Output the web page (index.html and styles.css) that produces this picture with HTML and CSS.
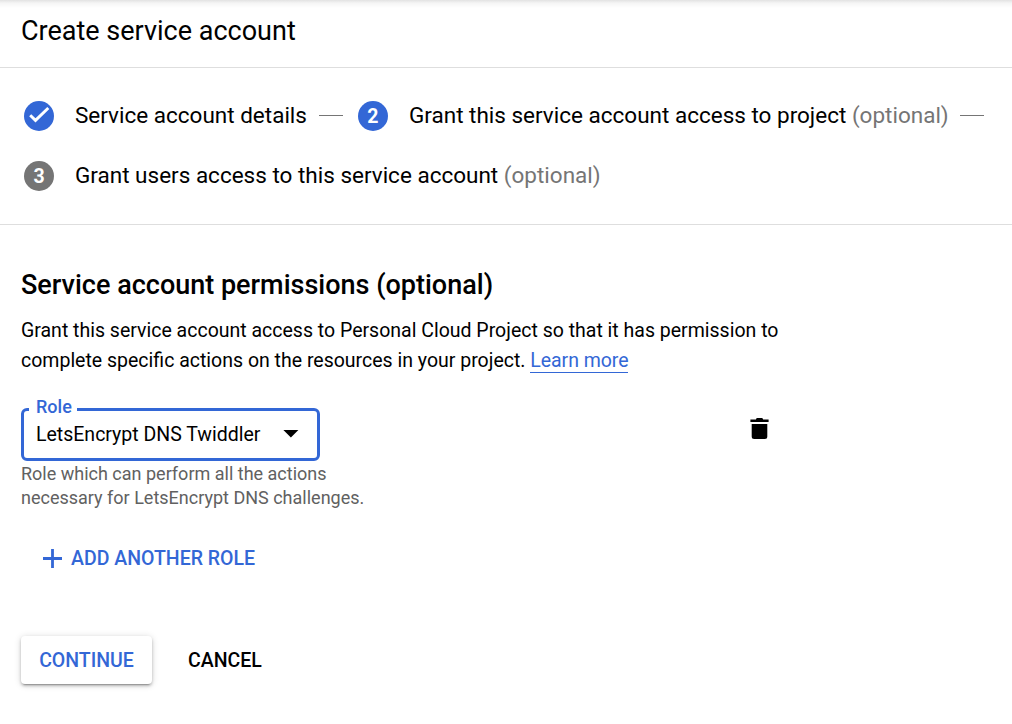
FILE: index.html
```html
<!DOCTYPE html>
<html lang="en">
<head>
<meta charset="utf-8">
<title>Create service account</title>
<link rel="stylesheet" href="styles.css">
</head>
<body>
<header class="header"><h1 class="title">Create service account</h1></header>
<ol class="stepper">
  <li class="step">
    <span class="badge badge-done"><svg width="22" height="22" viewBox="0 0 22 22"><path d="M2.2 10.2l5.3 5.2L20.3 3" fill="none" stroke="#fff" stroke-width="2.9"/></svg></span>
    <span class="label">Service account details</span><span class="connector"></span>
  </li>
  <li class="step">
    <span class="badge">2</span>
    <span class="label label-project">Grant this service account access to project <span class="optional">(optional)</span></span><span class="connector"></span>
  </li>
  <li class="step">
    <span class="badge badge-pending">3</span>
    <span class="label">Grant users access to this service account <span class="optional">(optional)</span></span>
  </li>
</ol>
<main class="content">
  <h2 class="heading">Service account permissions (optional)</h2>
  <p class="description">Grant this service account access to Personal Cloud Project so that it has permission to<br>complete specific actions on the resources in your project. <a class="link" href="#">Learn more</a></p>
  <div class="role-row">
    <div class="field">
      <div class="select"><span class="select-label">Role</span><span class="select-value">LetsEncrypt DNS Twiddler</span><svg class="caret" width="16" height="8" viewBox="0 0 16 8"><path d="M.4 0h15L7.9 7.5z"/></svg></div>
      <p class="hint">Role which can perform all the actions<br>necessary for LetsEncrypt DNS challenges.</p>
    </div>
    <button class="delete" aria-label="Delete role"><svg width="19" height="22" viewBox="0 0 19 22"><path d="M.4 1.4h5.5L6.7 0h5.6l.9 1.4h5.4v2.7H.4zM1.7 6h15.6v12.5q0 2.5-2.5 2.5H4.2q-2.5 0-2.5-2.5z"/></svg></button>
  </div>
  <button class="add"><svg width="19" height="19" viewBox="0 0 19 19"><path d="M9.5 0v19M0 9.5h19" stroke="currentColor" stroke-width="2.8"/></svg><span class="add-text">ADD ANOTHER ROLE</span></button>
  <div class="actions"><button class="continue">CONTINUE</button><button class="cancel">CANCEL</button></div>
</main>
</body>
</html>
```
FILE: styles.css
```css
* { box-sizing: border-box; }
body { margin: 0; height: 724px; overflow: hidden; background: #fff; color: #000; font-family: Roboto, sans-serif; font-size: 19.5px; }
h1, h2, p, ol { margin: 0; padding: 0; }
button { border: 0; background: none; padding: 0; font: 500 19.5px/24px Roboto, sans-serif; color: #000; }
svg { display: block; flex: none; }
.header { height: 68px; padding: 13px 21px 0; border-bottom: 1px solid #dedede; background: linear-gradient(#e2e2e2, #f5f5f5 3px, #fff 8px); }
.title { font-size: 27px; font-weight: 400; line-height: 36px; white-space: nowrap; }
.stepper { height: 157px; padding: 18px 24px 0; border-bottom: 1px solid #dedede; display: flex; flex-wrap: wrap; align-content: flex-start; list-style: none; column-gap: 15px; }
.step { height: 60px; display: flex; align-items: center; white-space: nowrap; }
.badge { width: 30px; height: 30px; padding-top: 2px; border-radius: 50%; background: #3367d6; color: #fff; display: flex; align-items: center; justify-content: center; font-size: 19.5px; font-weight: 700; line-height: 28px; }
.badge-done { padding-top: 0; }
.badge-pending { background: #757575; }
.label { margin-left: 21px; padding-bottom: 2px; font-size: 22.5px; line-height: 30px; }
.label-project { margin-right: -1px; }
.optional { color: #757575; }
.connector { width: 24px; height: 1px; margin: 0 0 1px 12px; background: #757575; }
.content { padding: 42px 21px 0; }
.heading { font-size: 27px; font-weight: 500; line-height: 36px; white-space: nowrap; }
.description { margin-top: 13px; line-height: 30px; white-space: nowrap; }
.link { display: inline-block; line-height: 22px; color: #3367d6; letter-spacing: -.05px; text-decoration: none; border-bottom: 1px solid #3367d6; }
.role-row { margin-top: 32px; width: 748px; display: flex; justify-content: space-between; align-items: flex-start; }
.select { position: relative; width: 299px; height: 53px; border: 3px solid #3367d6; border-radius: 6px; padding: 0 18px 0 12px; display: flex; align-items: center; justify-content: space-between; }
.select-label { position: absolute; left: 5px; top: -16px; padding: 0 5px 0 7px; background: #fff; color: #3367d6; font-size: 18px; font-weight: 500; line-height: 24px; }
.caret { margin-bottom: 1px; }
.hint { margin-top: 1px; color: #616161; font-size: 18px; line-height: 24px; white-space: nowrap; }
.delete { margin-top: 10px; }
.add { margin: 36px 0 0 22px; height: 24px; display: flex; align-items: center; gap: 9px; color: #3367d6; white-space: nowrap; }
.add-text { padding-top: 2px; }
.actions { margin-top: 66px; display: flex; gap: 36px; }
.continue, .cancel { height: 48px; padding-top: 2px; }
.continue { width: 131px; border-radius: 4px; background: #fff; color: #3367d6; box-shadow: 0 3px 1px -2px rgba(0,0,0,.2), 0 2px 3px rgba(0,0,0,.22), 0 1px 7px rgba(0,0,0,.16); }
```
